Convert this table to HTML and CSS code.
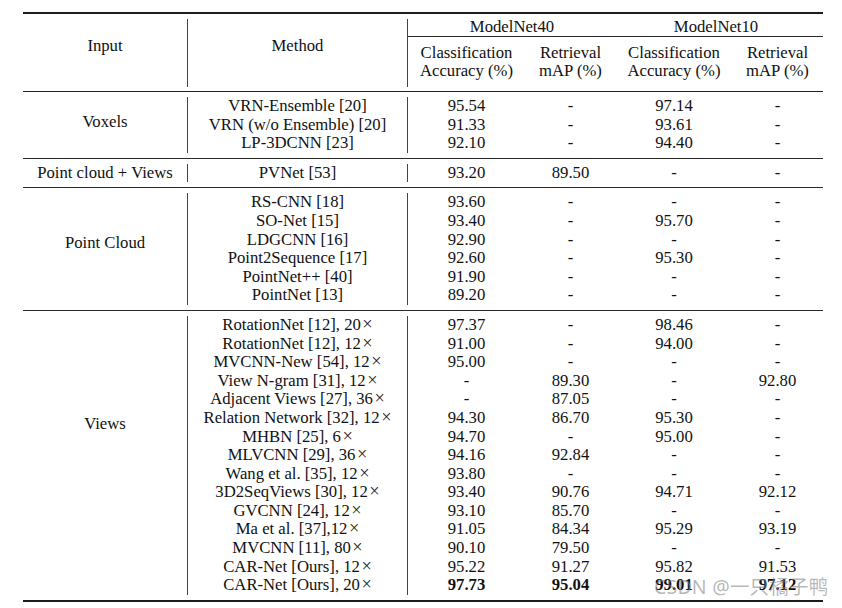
FILE: index.html
```html
<!DOCTYPE html>
<html lang="en">
<head>
<meta charset="utf-8">
<title>Comparison table</title>
<link rel="stylesheet" href="styles.css">
</head>
<body>
<div class="page">
  <div class="tbl">
    <div class="grp head">
      <div class="in in-hd">Input</div>
      <div class="meth meth-hd"><div class="meth-label">Method</div></div>
      <div class="data data-hd">
        <div class="hd-top">
          <div class="hd-set hd-40">ModelNet40</div>
          <div class="hd-set hd-10">ModelNet10</div>
        </div>
        <div class="hd-sub">
          <div>Classification<br>Accuracy (%)</div>
          <div>Retrieval<br>mAP (%)</div>
          <div>Classification<br>Accuracy (%)</div>
          <div>Retrieval<br>mAP (%)</div>
        </div>
      </div>
    </div>

    <div class="grp">
      <div class="in in-vox">Voxels</div>
      <div class="meth">
        <div>VRN-Ensemble [20]</div>
        <div>VRN (w/o Ensemble) [20]</div>
        <div>LP-3DCNN [23]</div>
      </div>
      <div class="data">
        <div>95.54</div><div>-</div><div>97.14</div><div>-</div>
        <div>91.33</div><div>-</div><div>93.61</div><div>-</div>
        <div>92.10</div><div>-</div><div>94.40</div><div>-</div>
      </div>
    </div>

    <div class="grp">
      <div class="in in-pv">Point cloud + Views</div>
      <div class="meth">
        <div>PVNet [53]</div>
      </div>
      <div class="data">
        <div>93.20</div><div>89.50</div><div>-</div><div>-</div>
      </div>
    </div>

    <div class="grp">
      <div class="in in-pc">Point Cloud</div>
      <div class="meth">
        <div>RS-CNN [18]</div>
        <div>SO-Net [15]</div>
        <div>LDGCNN [16]</div>
        <div>Point2Sequence [17]</div>
        <div>PointNet++ [40]</div>
        <div>PointNet [13]</div>
      </div>
      <div class="data">
        <div>93.60</div><div>-</div><div>-</div><div>-</div>
        <div>93.40</div><div>-</div><div>95.70</div><div>-</div>
        <div>92.90</div><div>-</div><div>-</div><div>-</div>
        <div>92.60</div><div>-</div><div>95.30</div><div>-</div>
        <div>91.90</div><div>-</div><div>-</div><div>-</div>
        <div>89.20</div><div>-</div><div>-</div><div>-</div>
      </div>
    </div>

    <div class="grp last">
      <div class="in in-views">Views</div>
      <div class="meth">
        <div>RotationNet [12], 20<span class="x">×</span></div>
        <div>RotationNet [12], 12<span class="x">×</span></div>
        <div>MVCNN-New [54], 12<span class="x">×</span></div>
        <div>View N-gram [31], 12<span class="x">×</span></div>
        <div>Adjacent Views [27], 36<span class="x">×</span></div>
        <div>Relation Network [32], 12<span class="x">×</span></div>
        <div>MHBN [25], 6<span class="x">×</span></div>
        <div>MLVCNN [29], 36<span class="x">×</span></div>
        <div>Wang et al. [35], 12<span class="x">×</span></div>
        <div>3D2SeqViews [30], 12<span class="x">×</span></div>
        <div>GVCNN [24], 12<span class="x">×</span></div>
        <div>Ma et al. [37],12<span class="x">×</span></div>
        <div>MVCNN [11], 80<span class="x">×</span></div>
        <div>CAR-Net [Ours], 12<span class="x">×</span></div>
        <div>CAR-Net [Ours], 20<span class="x">×</span></div>
      </div>
      <div class="data">
        <div>97.37</div><div>-</div><div>98.46</div><div>-</div>
        <div>91.00</div><div>-</div><div>94.00</div><div>-</div>
        <div>95.00</div><div>-</div><div>-</div><div>-</div>
        <div>-</div><div>89.30</div><div>-</div><div>92.80</div>
        <div>-</div><div>87.05</div><div>-</div><div>-</div>
        <div>94.30</div><div>86.70</div><div>95.30</div><div>-</div>
        <div>94.70</div><div>-</div><div>95.00</div><div>-</div>
        <div>94.16</div><div>92.84</div><div>-</div><div>-</div>
        <div>93.80</div><div>-</div><div>-</div><div>-</div>
        <div>93.40</div><div>90.76</div><div>94.71</div><div>92.12</div>
        <div>93.10</div><div>85.70</div><div>-</div><div>-</div>
        <div>91.05</div><div>84.34</div><div>95.29</div><div>93.19</div>
        <div>90.10</div><div>79.50</div><div>-</div><div>-</div>
        <div>95.22</div><div>91.27</div><div>95.82</div><div>91.53</div>
        <div class="best">97.73</div><div class="best">95.04</div><div class="best">99.01</div><div class="best">97.12</div>
      </div>
    </div>
  </div>
  <div class="watermark">CSDN @一只橘子鸭</div>
</div>
</body>
</html>
```

FILE: styles.css
```css
* { box-sizing: border-box; }

html, body {
  margin: 0;
  padding: 0;
  background: #ffffff;
}

.page {
  position: relative;
  width: 842px;
  height: 608px;
  overflow: hidden;
  padding-top: 12px;
  padding-left: 23px;
  font-family: "Liberation Serif", "Times New Roman", serif;
  font-size: 16.7px;
  line-height: 18.6px;
  color: #111;
}

.tbl {
  width: 800px;
  border-top: 2px solid #1c1c1c;
  border-bottom: 2px solid #1c1c1c;
}

.grp {
  display: flex;
  padding: 5px 0;
  border-bottom: 1px solid #2a2a2a;
}

.grp.last {
  border-bottom: none;
}

.grp.head {
  padding: 5px 0 4px;
  border-bottom: 1.5px solid #222;
}

.in {
  width: 164px;
  text-align: center;
  white-space: nowrap;
}

.in-hd { padding-top: 18.4px; }
.in-vox { padding-top: 16.4px; }
.in-pv { padding-top: 0; }
.in-pc { padding-top: 40.7px; }
.in-views { padding-top: 98.7px; }

.meth {
  width: 220px;
  border-left: 1px solid #444;
  text-align: center;
  white-space: nowrap;
}

.meth-hd {
  height: 68px;
}

.meth-label {
  padding-top: 18.4px;
}

.x {
  font-size: 1.1em;
  line-height: 16px;
  margin-left: 1.5px;
  font-weight: 400;
  color: #222;
}

.data {
  width: 416px;
  border-left: 1px solid #444;
  display: grid;
  grid-template-columns: 117px 91px 116px 91px;
  text-align: center;
  white-space: nowrap;
}

.data-hd {
  display: flex;
  flex-direction: column;
}

.hd-top {
  display: flex;
  height: 18px;
  border-bottom: 1px solid #2a2a2a;
  line-height: 16px;
}

.hd-set {
  text-align: center;
}

.hd-40 { width: 208px; }
.hd-10 { width: 207px; padding-right: 7px; }

.hd-sub {
  display: grid;
  grid-template-columns: 117px 91px 116px 91px;
  padding-top: 6.6px;
}

.best {
  font-weight: 700;
}

.watermark {
  position: absolute;
  left: 654px;
  top: 575px;
  font-family: "Noto Sans", "Noto Sans CJK SC", sans-serif;
  font-size: 19.5px;
  line-height: 24px;
  color: rgba(130, 130, 130, 0.58);
  white-space: nowrap;
  letter-spacing: 0.2px;
}
```
